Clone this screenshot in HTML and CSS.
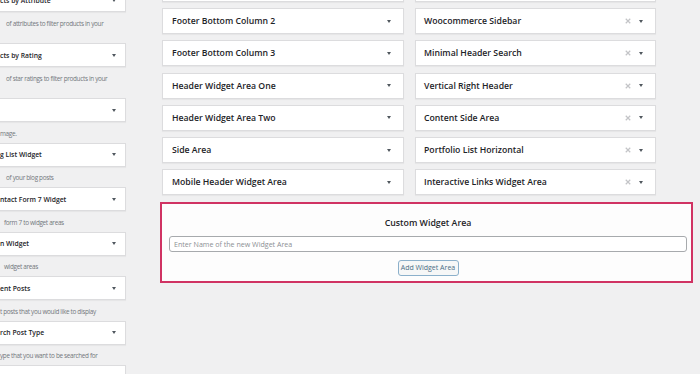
FILE: index.html
```html
<!DOCTYPE html>
<html lang="en">
<head>
  <meta charset="UTF-8" />
  <title>Widgets</title>
  <link rel="stylesheet" href="styles.css">
</head>
<body>

  <div class="page">

    <div class="available">
      <div class="widget"><span class="widget-title">cts by Attribute</span><span class="arrow"></span></div>
      <div class="desc desc-wrap gap">of attributes to filter products in your</div>

      <div class="widget"><span class="widget-title">cts by Rating</span><span class="arrow"></span></div>
      <div class="desc desc-wrap gap">of star ratings to filter products in your</div>

      <div class="widget"><span class="widget-title"></span><span class="arrow"></span></div>
      <div class="desc">mage.</div>

      <div class="widget"><span class="widget-title">g List Widget</span><span class="arrow"></span></div>
      <div class="desc gap">of your blog posts</div>

      <div class="widget"><span class="widget-title">ntact Form 7 Widget</span><span class="arrow"></span></div>
      <div class="desc gap-sm">form 7 to widget areas</div>

      <div class="widget"><span class="widget-title">n Widget</span><span class="arrow"></span></div>
      <div class="desc gap-sm">widget areas</div>

      <div class="widget"><span class="widget-title">ent Posts</span><span class="arrow"></span></div>
      <div class="desc">t posts that you would like to display</div>

      <div class="widget"><span class="widget-title">rch Post Type</span><span class="arrow"></span></div>
      <div class="desc">ype that you want to be searched for</div>

      <div class="widget"><span class="widget-title"></span><span class="arrow"></span></div>
    </div>

    <div class="areas">
      <div class="area-grid">
        <div class="area-col">
          <div class="sidebar"><span class="sidebar-title"></span><span class="arrow"></span></div>
          <div class="sidebar"><span class="sidebar-title">Footer Bottom Column 2</span><span class="arrow"></span></div>
          <div class="sidebar"><span class="sidebar-title">Footer Bottom Column 3</span><span class="arrow"></span></div>
          <div class="sidebar"><span class="sidebar-title">Header Widget Area One</span><span class="arrow"></span></div>
          <div class="sidebar"><span class="sidebar-title">Header Widget Area Two</span><span class="arrow"></span></div>
          <div class="sidebar"><span class="sidebar-title">Side Area</span><span class="arrow"></span></div>
          <div class="sidebar"><span class="sidebar-title">Mobile Header Widget Area</span><span class="arrow"></span></div>
        </div>
        <div class="area-col">
          <div class="sidebar custom"><span class="sidebar-title"></span><svg class="remove" viewBox="0 0 8 8"><path d="M1 1L7 7M7 1L1 7"/></svg><span class="arrow"></span></div>
          <div class="sidebar custom"><span class="sidebar-title">Woocommerce Sidebar</span><svg class="remove" viewBox="0 0 8 8"><path d="M1 1L7 7M7 1L1 7"/></svg><span class="arrow"></span></div>
          <div class="sidebar custom"><span class="sidebar-title">Minimal Header Search</span><svg class="remove" viewBox="0 0 8 8"><path d="M1 1L7 7M7 1L1 7"/></svg><span class="arrow"></span></div>
          <div class="sidebar custom"><span class="sidebar-title">Vertical Right Header</span><svg class="remove" viewBox="0 0 8 8"><path d="M1 1L7 7M7 1L1 7"/></svg><span class="arrow"></span></div>
          <div class="sidebar custom"><span class="sidebar-title">Content Side Area</span><svg class="remove" viewBox="0 0 8 8"><path d="M1 1L7 7M7 1L1 7"/></svg><span class="arrow"></span></div>
          <div class="sidebar custom"><span class="sidebar-title">Portfolio List Horizontal</span><svg class="remove" viewBox="0 0 8 8"><path d="M1 1L7 7M7 1L1 7"/></svg><span class="arrow"></span></div>
          <div class="sidebar custom"><span class="sidebar-title">Interactive Links Widget Area</span><svg class="remove" viewBox="0 0 8 8"><path d="M1 1L7 7M7 1L1 7"/></svg><span class="arrow"></span></div>
        </div>
      </div>

      <div class="custom-area">
        <h3 class="custom-title">Custom Widget Area</h3>
        <input class="custom-input" type="text" placeholder="Enter Name of the new Widget Area">
        <button class="custom-button">Add Widget Area</button>
      </div>
    </div>

  </div>

</body>
</html>
```

FILE: styles.css
```css
body {
  margin: 0;
  background: #f0f0f1;
  font-family: "Open Sans", "Noto Sans", sans-serif;
  color: #1d2327;
  overflow: hidden;
}
.page {
  display: flex;
  align-items: flex-start;
  gap: 34px;
}

/* available widgets, cut at the left edge */
.available {
  width: 126px;
  margin-top: -12px;
  display: flex;
  flex-direction: column;
}
.widget {
  height: 24px;
  box-sizing: border-box;
  background: #fff;
  border: 1px solid #dcdcde;
  border-left: none;
  box-shadow: 0 1px 1px rgba(0,0,0,0.04);
  display: flex;
  align-items: center;
  justify-content: space-between;
  padding-right: 9px;
}
.widget-title {
  font-size: 6.8px;
  font-weight: 600;
  white-space: nowrap;
}
.desc {
  font-size: 6.4px;
  letter-spacing: -0.33px;
  line-height: 10.5px;
  color: #72777c;
  padding: 6.5px 0 3.5px;
  white-space: nowrap;
}
.desc-wrap {
  height: 21px;
}
.gap {
  padding-left: 6px;
}
.gap-sm {
  padding-left: 4px;
}

/* widget areas */
.areas {
  width: 533px;
}
.area-grid {
  display: grid;
  grid-template-columns: 242px 241px;
  gap: 11px;
  padding-left: 2px;
  margin-top: -24.3px;
}
.area-col {
  display: flex;
  flex-direction: column;
  gap: 6.3px;
}
.sidebar {
  height: 26px;
  box-sizing: border-box;
  background: #fff;
  border: 1px solid #dcdcde;
  box-shadow: 0 1px 1px rgba(0,0,0,0.04);
  display: flex;
  align-items: center;
  padding: 0 12.5px 0 9px;
}
.sidebar.custom {
  padding-left: 8px;
}
.sidebar-title {
  font-size: 8.7px;
  font-weight: 600;
  flex: 1;
  white-space: nowrap;
}
.arrow {
  width: 0;
  height: 0;
  border-left: 2.5px solid transparent;
  border-right: 2.5px solid transparent;
  border-top: 3px solid #50575e;
}
.remove {
  width: 6px;
  height: 6px;
  margin-right: 8px;
  fill: none;
  stroke: #c3c4c7;
  stroke-width: 1.6;
}

/* custom widget area form */
.custom-area {
  margin-top: 6.5px;
  height: 81px;
  box-sizing: border-box;
  background: #fdfdfd;
  border: 2px solid #d03363;
  padding: 13px 4px 5px 7px;
  display: flex;
  flex-direction: column;
  align-items: center;
}
.custom-title {
  margin: 0;
  font-size: 8.8px;
  line-height: 12px;
  font-weight: 600;
}
.custom-input {
  align-self: stretch;
  margin: 7px 0 0;
  height: 16px;
  box-sizing: border-box;
  border: 1px solid #a7aaad;
  border-radius: 3px;
  background: #fff;
  padding: 0 4px;
  font-family: inherit;
  font-size: 7.1px;
}
.custom-input::placeholder {
  color: #8c8f94;
}
.custom-button {
  margin-top: 8px;
  width: 61px;
  height: 16px;
  box-sizing: border-box;
  border: 1px solid #8bb0cb;
  border-radius: 3px;
  background: #f6f7f7;
  color: #4a6d86;
  font-family: inherit;
  font-size: 7px;
  padding: 0;
}
```
